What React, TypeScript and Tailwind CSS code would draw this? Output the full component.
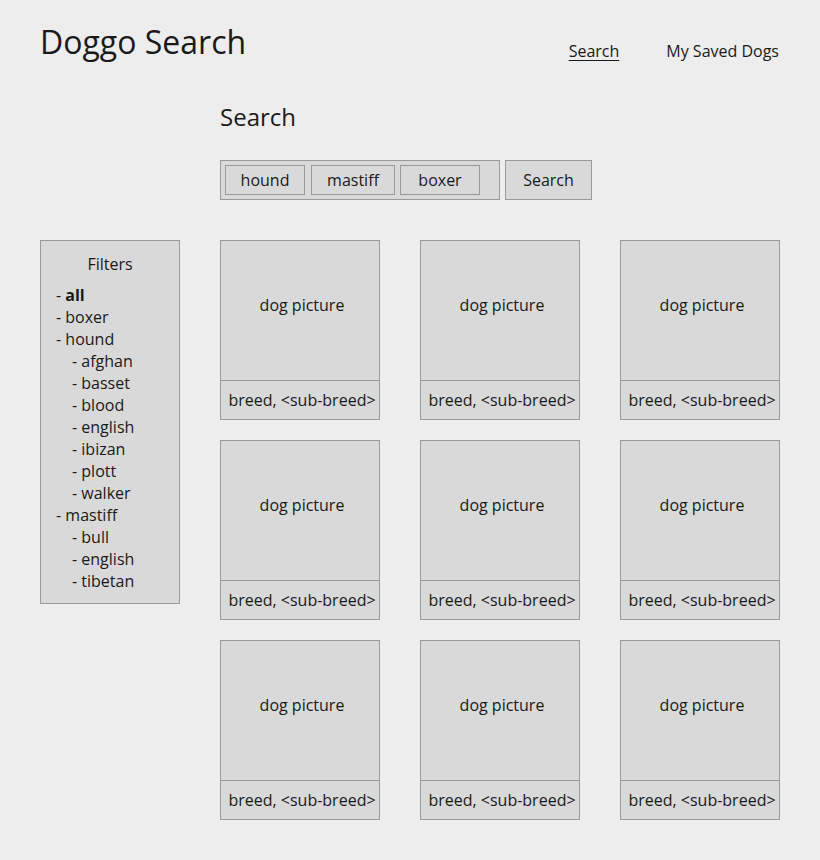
import React from "react";

const filters: { label: string; indent?: boolean; bold?: boolean }[] = [
  { label: "all", bold: true },
  { label: "boxer" },
  { label: "hound" },
  { label: "afghan", indent: true },
  { label: "basset", indent: true },
  { label: "blood", indent: true },
  { label: "english", indent: true },
  { label: "ibizan", indent: true },
  { label: "plott", indent: true },
  { label: "walker", indent: true },
  { label: "mastiff" },
  { label: "bull", indent: true },
  { label: "english", indent: true },
  { label: "tibetan", indent: true },
];

const tags = [
  { label: "hound", cls: "w-[80px]" },
  { label: "mastiff", cls: "w-[84px] ml-[6px]" },
  { label: "boxer", cls: "w-[80px] ml-[5px]" },
];

function Card() {
  return (
    <div className="flex h-[180px] w-[160px] flex-col border border-[#999999] bg-[#d9d9d9]">
      <div className="h-[140px] border-b border-[#999999] pl-1 pt-[52px] text-center leading-6">
        dog picture
      </div>
      <div className="flex flex-1 items-center justify-center pl-1 leading-6 whitespace-nowrap">
        breed, &lt;sub-breed&gt;
      </div>
    </div>
  );
}

export default function App() {
  return (
    <div
      className="min-h-[860px] bg-[#ededed] px-10 pt-[18px] text-[16px] text-[#1a1a1a]"
      style={{ fontFamily: '"Open Sans", sans-serif' }}
    >
      <header className="flex items-start justify-between">
        <h1 className="text-[32px] leading-[48px]">Doggo Search</h1>
        <nav className="mr-px mt-[21px] flex gap-[47px] leading-6">
          <a className="underline underline-offset-[3px]">Search</a>
          <a>My Saved Dogs</a>
        </nav>
      </header>

      <div className="mt-[33px] grid grid-cols-[140px_560px] gap-x-10">
        <div />
        <div>
          <h2 className="text-[24px] leading-[36px]">Search</h2>
          <div className="mt-[25px] flex gap-[5px]">
            <div className="flex h-10 w-[280px] border border-[#999999] bg-[#d9d9d9] p-1">
              {tags.map((t) => (
                <div
                  key={t.label}
                  className={`flex h-[30px] items-center justify-center border border-[#999999] bg-[#d9d9d9] leading-6 ${t.cls}`}
                >
                  {t.label}
                </div>
              ))}
            </div>
            <button className="flex h-10 w-[87px] items-center justify-center border border-[#999999] bg-[#d9d9d9] leading-6">
              Search
            </button>
          </div>
        </div>

        <aside className="mt-10 self-start border border-[#999999] bg-[#d9d9d9] pb-[11px] pl-[15px] pt-3">
          <div className="pr-[15px] text-center leading-[22px]">Filters</div>
          <ul className="mt-[9px]">
            {filters.map((f, i) => (
              <li
                key={i}
                className={`leading-[22px] ${f.indent ? "pl-4" : ""}`}
              >
                - {f.bold ? <span className="font-bold">{f.label}</span> : f.label}
              </li>
            ))}
          </ul>
        </aside>

        <div className="mt-10 grid grid-cols-[160px_160px_160px] gap-x-10 gap-y-5">
          {Array.from({ length: 9 }).map((_, i) => (
            <Card key={i} />
          ))}
        </div>
      </div>
    </div>
  );
}
